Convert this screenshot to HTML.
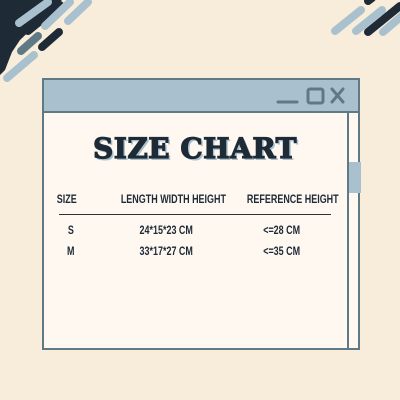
<!DOCTYPE html>
<html><head><style>
body{margin:0;width:400px;height:400px;background:#f8eddb;position:relative;overflow:hidden;font-family:"Liberation Sans",sans-serif}
.win{position:absolute;left:42px;top:78px;width:314px;height:268px;border:2px solid #5f7985;background:#fef8f1}
.tb{position:absolute;left:0;top:0;right:0;height:31px;background:#a9c1ce;border-bottom:2px solid #5f7985}
.div{position:absolute;left:303px;top:33px;bottom:0;width:2px;background:#5f7985}
.thumb{position:absolute;left:305px;top:82px;width:12px;height:31px;background:#a9c1ce}
h1{position:absolute;left:0;width:302px;top:52px;margin:0;text-align:center;font-family:"DejaVu Serif",serif;font-weight:900;font-size:28px;color:#1e2a36;-webkit-text-stroke:1.2px #1e2a36;text-shadow:2px 2px 0 #a9c1ce;letter-spacing:0.5px}
.t{position:absolute;font-size:11.5px;font-weight:bold;color:#1e2a36;white-space:nowrap;transform:scaleX(0.78);transform-origin:center;font-family:"Liberation Sans Narrow","Liberation Sans",sans-serif}
.line{position:absolute;left:15px;top:134px;width:272px;height:1px;background:#333}
</style></head><body>
<svg width="400" height="400" style="position:absolute;left:0;top:0">
<polygon points="0,0 62,0 20,40 12,52 5,70 0,75" fill="#1e2a36"/>
<g stroke-linecap="round" stroke-width="8">
<line x1="19" y1="23" x2="48" y2="2" stroke="#a9c1ce"/>
<line x1="28" y1="31" x2="60" y2="5" stroke="#1e2a36"/>
<line x1="45" y1="26" x2="70" y2="2" stroke="#a9c1ce"/>
<line x1="68" y1="21" x2="88" y2="2" stroke="#a9c1ce"/>
<line x1="21" y1="51" x2="38" y2="36" stroke="#5f7985"/>
<line x1="42" y1="47" x2="59" y2="32" stroke="#1e2a36"/>
<line x1="7" y1="78" x2="34" y2="55" stroke="#a9c1ce"/>
<line x1="335" y1="31" x2="361" y2="10" stroke="#a9c1ce"/>
<line x1="356" y1="31" x2="382" y2="10" stroke="#a9c1ce"/>
<line x1="368" y1="32" x2="400" y2="6" stroke="#1e2a36"/>
<line x1="383" y1="32" x2="404" y2="14" stroke="#a9c1ce"/>
<line x1="368" y1="1" x2="372" y2="-2" stroke="#1e2a36"/>
</g>
</svg>
<div class="win">
<div class="tb">
<svg width="314" height="31" style="position:absolute;left:0;top:0">
<line x1="234" y1="22" x2="253" y2="22" stroke="#5f7985" stroke-width="3" stroke-linecap="round"/>
<rect x="264" y="9" width="15" height="14" rx="2" fill="none" stroke="#5f7985" stroke-width="3"/>
<path d="M288 9 L299 22 M299 9 L288 22" stroke="#5f7985" stroke-width="3" stroke-linecap="round"/>
</svg>
</div>
<div class="div"></div><div class="thumb"></div>
<h1>SIZE CHART</h1>
<div class="t" style="left:10px;top:114px">SIZE</div>
<div class="t" style="left:62px;top:114px">LENGTH WIDTH HEIGHT</div>
<div class="t" style="left:190px;top:114px">REFERENCE HEIGHT</div>
<div class="line"></div>
<div class="t" style="left:23px;top:145px">S</div>
<div class="t" style="left:88px;top:145px">24*15*23 CM</div>
<div class="t" style="left:214px;top:145px">&lt;=28 CM</div>
<div class="t" style="left:22px;top:166px">M</div>
<div class="t" style="left:88px;top:166px">33*17*27 CM</div>
<div class="t" style="left:214px;top:166px">&lt;=35 CM</div>
</div>
</body></html>
